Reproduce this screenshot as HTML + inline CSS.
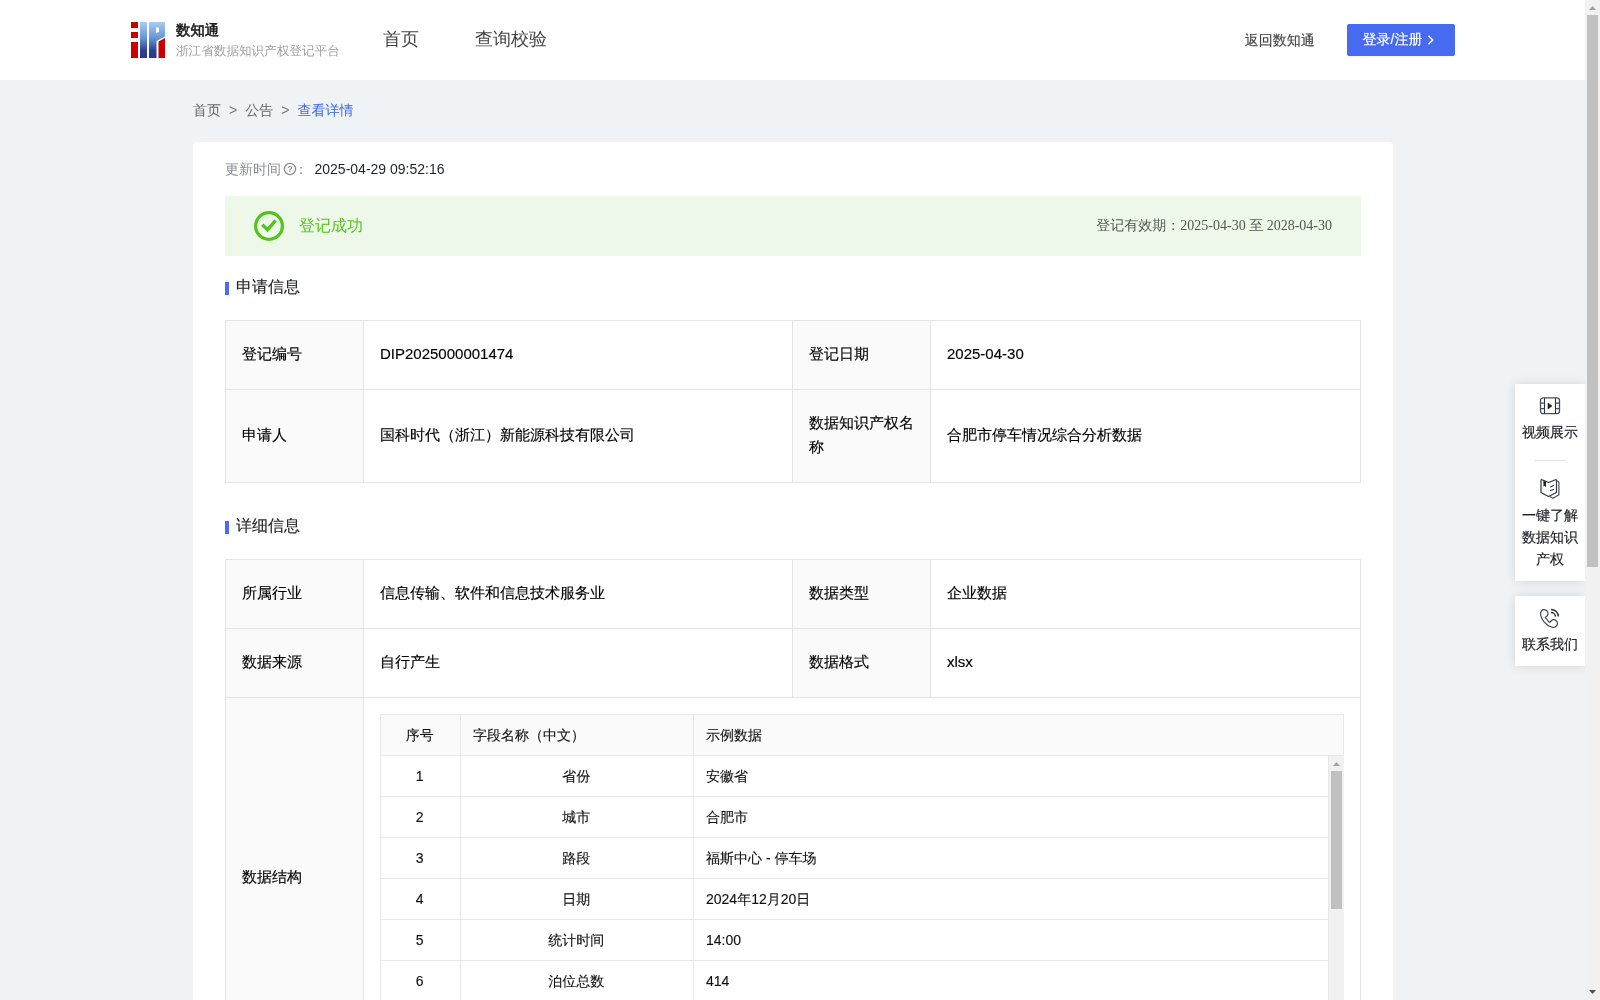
<!DOCTYPE html>
<html lang="zh-CN">
<head>
<meta charset="utf-8">
<title>数知通 - 浙江省数据知识产权登记平台</title>
<style>
*{box-sizing:border-box;margin:0;padding:0}
html,body{width:1600px;height:1000px;overflow:hidden}
body{background:#eff3f6;font-family:"Liberation Sans","WenQuanYi Zen Hei",sans-serif;font-size:14px;color:#1f2329;position:relative}
#view{position:absolute;left:0;top:0;width:1585px;height:1000px;overflow:hidden;will-change:transform}
/* header */
#hd{position:absolute;left:0;top:0;width:1585px;height:80px;background:#fff}
#logo{position:absolute;left:131px;top:22px}
#brand{position:absolute;left:176px;top:20px;font-size:14.4px;font-weight:bold;color:#1a1a1a;line-height:20px;-webkit-text-stroke:0.55px #1a1a1a}
#sub{position:absolute;left:176px;top:41.5px;font-size:12.6px;color:#a0a0a0;line-height:18px;white-space:nowrap}
.nav{position:absolute;top:26px;font-size:18px;line-height:26px;color:#444}
#back{position:absolute;left:1244.8px;top:29.5px;font-size:14px;line-height:20px;color:#444;-webkit-text-stroke:0.15px #444}
#login{position:absolute;left:1347px;top:24px;width:108px;height:32px;background:#466af0;border-radius:2px;color:#fff;font-size:14px;line-height:30px;padding-left:15.5px;white-space:nowrap;box-shadow:0 2px 0 rgba(0,0,0,.03);-webkit-text-stroke:0.2px #fff}
/* breadcrumb */
#bc{position:absolute;left:193px;top:100px;font-size:14px;line-height:20px;color:#666;white-space:nowrap}
#bc span.sep{margin:0 8px;color:#777}
#bc span.cur{color:#3a66e6}
/* card */
#card{position:absolute;left:193px;top:142px;width:1200px;height:900px;background:#fff;border-radius:4px 4px 0 0}
#upd{position:absolute;left:32px;top:17px;line-height:20px;font-size:14px;color:#8a8d93;white-space:nowrap}
#upd b{font-weight:normal;color:#1f2329;margin-left:3.5px}
#ok{position:absolute;left:32px;top:54px;width:1136px;height:60px;background:#edf8e8}
#ok .t{position:absolute;left:74px;top:18px;font-size:16px;line-height:24px;color:#52c41a}
#ok .r{position:absolute;right:29px;top:20px;font-size:14px;line-height:20px;color:#555;font-family:"Liberation Serif","WenQuanYi Zen Hei",serif;white-space:nowrap}
.sec{-webkit-text-stroke:0.15px #1f2329;position:absolute;left:32px;font-size:16px;line-height:24px;color:#1f2329;padding-left:11px}
.sec:before{content:"";position:absolute;left:0;top:6.5px;width:4px;height:13px;background:#4a6cf7}
table{border-collapse:collapse;table-layout:fixed}
.info{position:absolute;left:32px;width:1136px}
.info td{border:1px solid #e4e4e4;padding:0 16px;font-size:14px;line-height:24px;color:#1f2329;vertical-align:middle}
.info td.l{background:#fafafa}

.info td{font-size:15px;color:#000;-webkit-text-stroke:0.15px #000;padding-bottom:2px}
#inner{position:absolute;left:187px;top:572px;width:964px;height:400px;overflow:hidden}
#inner table{width:964px}
#inner td,#inner th{border:1px solid #e8e8e8;height:41px;font-size:14px;font-weight:normal;line-height:22px;color:#1f2329;padding:0 12px;vertical-align:middle;text-align:left}
#inner th{background:#fafafa}
#inner .c{text-align:center;padding-right:13.5px}
#inner td,#inner th{padding-bottom:1px;color:#111;-webkit-text-stroke:0.12px #111}
#isb{position:absolute;left:949px;top:42px;width:15px;height:400px;background:#f1f1f1}
#isb i{position:absolute;left:2px;top:15px;width:11px;height:138px;background:#c1c1c1}
.arr{position:absolute;left:4px;width:7px;height:4px}
#psb{position:absolute;left:1585px;top:0;width:15px;height:1000px;background:#f1f1f1}
#psb i{position:absolute;left:2px;top:15px;width:11px;height:552px;background:#c1c1c1}
.fl{-webkit-text-stroke:0.2px #1f2329;position:absolute;left:1515px;width:70px;background:#fff;box-shadow:0 0 10px rgba(0,0,0,.12);text-align:center;font-size:14px;line-height:22px;color:#1f2329}
.fl svg{position:absolute;left:24px}
.fl div{position:absolute;left:0;width:70px}
</style>
</head>
<body>
<div id="view">
<div id="hd">
  <svg id="logo" width="34" height="36" viewBox="0 0 34 36">
    <defs><linearGradient id="lg" x1="0" y1="0" x2="0" y2="1"><stop offset="0" stop-color="#a8cdf3"/><stop offset="0.45" stop-color="#6595d4"/><stop offset="0.8" stop-color="#2c418f"/><stop offset="1" stop-color="#27388a"/></linearGradient></defs>
    <rect x="0" y="0" width="7" height="6" fill="#cc0000"/><rect x="0" y="10" width="7" height="6" fill="#cc0000"/><rect x="0" y="20" width="7" height="16" fill="#cc0000"/>
    <rect x="9" y="0" width="7" height="36" fill="url(#lg)"/>
    <path d="M18 0H34V14.5L25.5 19V36H18Z M25 5.5H28V10L25 11Z" fill="url(#lg)" fill-rule="evenodd"/>
    <path d="M27.5 19.5L34 16V36H27.5Z" fill="#cc0000"/>
  </svg>
  <div id="brand">数知通</div>
  <div id="sub">浙江省数据知识产权登记平台</div>
  <div class="nav" style="left:383px">首页</div>
  <div class="nav" style="left:475px">查询校验</div>
  <div id="back">返回数知通</div>
  <div id="login">登录/注册 <svg width="8" height="12" viewBox="0 0 8 12" style="vertical-align:-1.5px;margin-left:0.5px"><path d="M1.5 1.8L5.6 6L1.5 10.2" fill="none" stroke="#fff" stroke-width="1.5"/></svg></div>
</div>
<div id="bc">首页<span class="sep">&gt;</span>公告<span class="sep">&gt;</span><span class="cur">查看详情</span></div>
<div id="card">
  <div id="upd">更新时间<svg width="14" height="14" viewBox="0 0 14 14" style="vertical-align:-2px;margin-left:2px"><circle cx="7" cy="7" r="5.6" fill="none" stroke="#8a8a8a" stroke-width="1.3"/><text x="7" y="10.2" font-size="9" font-weight="bold" text-anchor="middle" fill="#8a8a8a" font-family="Liberation Sans">?</text></svg><span style="margin-left:-3px;margin-right:3px">：</span><b>2025-04-29 09:52:16</b></div>
  <div id="ok">
    <svg width="32" height="32" viewBox="0 0 32 32" style="position:absolute;left:28px;top:14px"><circle cx="16" cy="16" r="13.4" fill="none" stroke="#52c41a" stroke-width="3.2"/><path d="M9.3 14.6L14.5 19.8L22.6 10.4" fill="none" stroke="#52c41a" stroke-width="3.3"/></svg>
    <div class="t">登记成功</div>
    <div class="r">登记有效期：2025-04-30 至 2028-04-30</div>
  </div>
  <div class="sec" style="top:133px">申请信息</div>
  <table class="info" style="top:178px"><colgroup><col style="width:138px"><col style="width:429px"><col style="width:138px"><col style="width:430px"></colgroup>
    <tr style="height:69px"><td class="l">登记编号</td><td>DIP2025000001474</td><td class="l">登记日期</td><td>2025-04-30</td></tr>
    <tr style="height:93px"><td class="l">申请人</td><td>国科时代（浙江）新能源科技有限公司</td><td class="l">数据知识产权名称</td><td>合肥市停车情况综合分析数据</td></tr>
  </table>
  <div class="sec" style="top:372px">详细信息</div>
  <table class="info" style="top:417px"><colgroup><col style="width:138px"><col style="width:429px"><col style="width:138px"><col style="width:430px"></colgroup>
    <tr style="height:69px"><td class="l">所属行业</td><td>信息传输、软件和信息技术服务业</td><td class="l">数据类型</td><td>企业数据</td></tr>
    <tr style="height:69px"><td class="l">数据来源</td><td>自行产生</td><td class="l">数据格式</td><td>xlsx</td></tr>
    <tr style="height:360px"><td class="l">数据结构</td><td colspan="3"></td></tr>
  </table>

  <div id="inner">
    <table>
      <colgroup><col style="width:80px"><col style="width:233px"><col style="width:635px"><col style="width:15px"></colgroup>
      <tr><th class="c">序号</th><th>字段名称（中文）</th><th colspan="2">示例数据</th></tr>
      <tr><td class="c">1</td><td class="c">省份</td><td>安徽省</td><td style="padding:0"></td></tr>
      <tr><td class="c">2</td><td class="c">城市</td><td>合肥市</td><td style="padding:0"></td></tr>
      <tr><td class="c">3</td><td class="c">路段</td><td>福斯中心 - 停车场</td><td style="padding:0"></td></tr>
      <tr><td class="c">4</td><td class="c">日期</td><td>2024年12月20日</td><td style="padding:0"></td></tr>
      <tr><td class="c">5</td><td class="c">统计时间</td><td>14:00</td><td style="padding:0"></td></tr>
      <tr><td class="c">6</td><td class="c">泊位总数</td><td>414</td><td style="padding:0"></td></tr>
      <tr><td class="c">7</td><td class="c">占用数</td><td>302</td><td style="padding:0"></td></tr>
    </table>
    <div id="isb"><svg class="arr" style="top:6px" viewBox="0 0 7 4"><path d="M0 4L3.5 0L7 4Z" fill="#a3a3a3"/></svg><i></i></div>
  </div>
</div>

<div class="fl" style="top:384px;height:197px">
  <svg style="top:12px" width="22" height="20" viewBox="0 0 22 20"><rect x="1.5" y="1.9" width="19" height="15.8" rx="2.6" fill="none" stroke="#4a4f57" stroke-width="1.3"/><path d="M5.5 1.9V17.7M16.5 1.9V17.7" stroke="#2b2f36" stroke-width="1.1" fill="none"/><path d="M1.5 7.2H5.5M1.5 12.6H5.5M16.5 7.2H20.5M16.5 12.6H20.5" stroke="#4a4f57" stroke-width="1.2" fill="none"/><path d="M9 7L13 10L9 13Z" fill="#1f2329" stroke="#1f2329" stroke-width="0.6" stroke-linejoin="round"/></svg>
  <div style="top:37px">视频展示</div>
  <span style="position:absolute;left:19px;top:76px;width:32px;height:1px;background:#e4e6ea"></span>
  <svg style="top:94px" width="22" height="22" viewBox="0 0 22 22"><path d="M2 2.4Q2 1.3 3 1.7L9.5 4.5L16.5 1.7Q17.5 1.3 17.5 2.4V14.5L9.5 18.5L2 14.5Z" fill="none" stroke="#33373e" stroke-width="1.2" stroke-linejoin="round"/><path d="M18 3.3Q19.9 2.8 19.9 4.6V16.8L14 20.3L10.2 18.3" fill="none" stroke="#4a4f57" stroke-width="1.2" stroke-linejoin="round"/><path d="M4.4 2.5L7 3.6V9L5.7 8L4.4 8.5Z" fill="#1f2329"/><path d="M11.5 9L14.5 7.5M11.5 12.6L14.5 11.5" stroke="#33373e" stroke-width="1.1" stroke-linecap="round"/></svg>
  <div style="top:120px">一键了解<br>数据知识<br>产权</div>
</div>
<div class="fl" style="top:596px;height:70px">
  <svg style="top:12px" width="22" height="22" viewBox="0 0 22 22"><path d="M5.5 1.6C3 1.2 1.3 3.5 1.6 6.5C2 11 6.5 17.5 13 19.3C16 20 18.8 17.8 18.4 15C18 12.5 15.5 11 13.5 11.8L10.5 14.5L6.3 9.3C8.5 8 9.5 6 8.8 4.2C8.2 2.6 7 1.8 5.5 1.6Z" fill="none" stroke="#3a3f47" stroke-width="1.15" stroke-linejoin="round"/><path d="M12 1.6A7.2 7.2 0 0 1 19.4 8.6M12 4.6A4.3 4.3 0 0 1 16.5 8.6" fill="none" stroke="#2b2f36" stroke-width="1.45"/></svg>
  <div style="top:37px">联系我们</div>
</div>
</div>
<div id="psb"><svg class="arr" style="top:6px" viewBox="0 0 7 4"><path d="M0 4L3.5 0L7 4Z" fill="#a3a3a3"/></svg><i></i><svg class="arr" style="top:990px" viewBox="0 0 7 4"><path d="M0 0L3.5 4L7 0Z" fill="#505050"/></svg></div>
</body>
</html>
